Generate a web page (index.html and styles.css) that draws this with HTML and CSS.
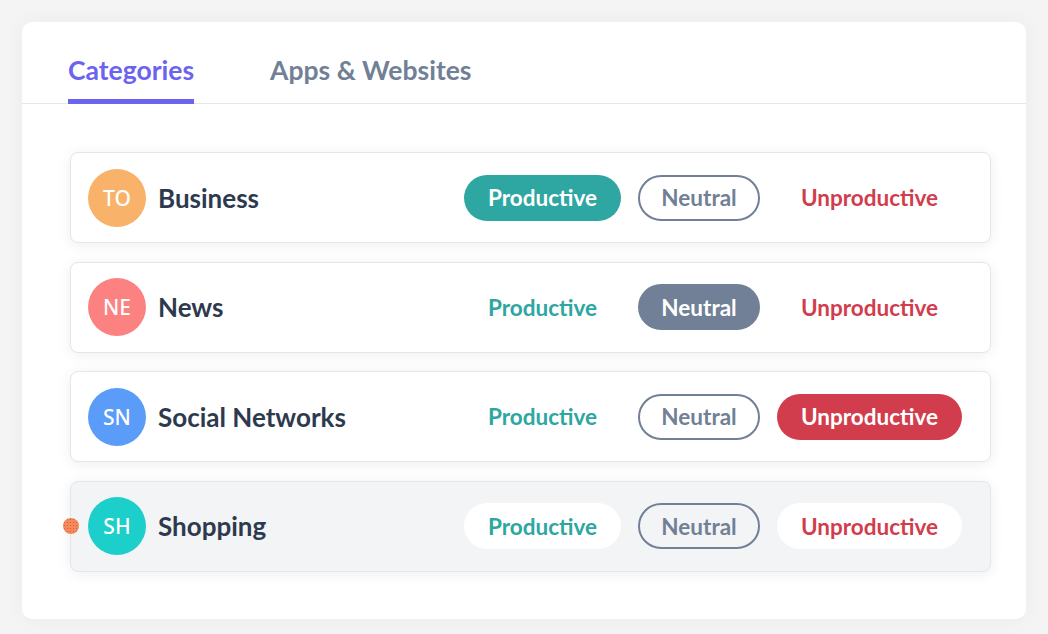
FILE: index.html
```html
<!DOCTYPE html>
<html>
<head>
<meta charset="utf-8">
<link rel="stylesheet" href="styles.css">
</head>
<body>
<div class="card">
  <div class="tabs">
    <div class="tab active">Categories</div>
    <div class="tab">Apps &amp; Websites</div>
  </div>
  <div class="list">
    <div class="row">
      <div class="who"><span class="avatar orange">TO</span><span class="name">Business</span></div>
      <div class="pills">
        <span class="pill prod filled">Productive</span>
        <span class="pill neu">Neutral</span>
        <span class="pill unp">Unproductive</span>
      </div>
    </div>
    <div class="row">
      <div class="who"><span class="avatar salmon">NE</span><span class="name">News</span></div>
      <div class="pills">
        <span class="pill prod">Productive</span>
        <span class="pill neu filled">Neutral</span>
        <span class="pill unp">Unproductive</span>
      </div>
    </div>
    <div class="row">
      <div class="who"><span class="avatar blue">SN</span><span class="name">Social Networks</span></div>
      <div class="pills">
        <span class="pill prod">Productive</span>
        <span class="pill neu">Neutral</span>
        <span class="pill unp filled">Unproductive</span>
      </div>
    </div>
    <div class="row hover">
      <span class="cursor"></span>
      <div class="who"><span class="avatar teal">SH</span><span class="name">Shopping</span></div>
      <div class="pills">
        <span class="pill prod">Productive</span>
        <span class="pill neu">Neutral</span>
        <span class="pill unp">Unproductive</span>
      </div>
    </div>
  </div>
</div>
</body>
</html>
```
FILE: styles.css
```css
* { box-sizing: border-box; }
html, body { margin: 0; padding: 0; }
body {
  background: #f4f4f5;
  font-family: Lato, "Open Sans", sans-serif;
  width: 1048px;
  height: 634px;
  padding: 22px 22px 0 22px;
}
.card {
  width: 1004px;
  height: 597px;
  background: #fff;
  border-radius: 10px;
  box-shadow: 0 0 24px rgba(0,0,0,0.04);
}
.tabs {
  display: flex;
  gap: 76px;
  padding: 0 46px;
  height: 82px;
  border-bottom: 1px solid #e2e8f0;
  align-items: flex-end;
}
.tab {
  font-size: 26.5px;
  font-weight: 700;
  color: #718096;
  padding-bottom: 14px;
  line-height: 30px;
  border-bottom: 5px solid transparent;
  margin-bottom: -1px;
}
.tab.active {
  color: #6c63ee;
  border-bottom-color: #6c63ee;
}
.list {
  padding: 48px 35px 0 48px;
  display: flex;
  flex-direction: column;
  gap: 18.67px;
}
.row {
  position: relative;
  height: 91px;
  border: 1px solid #e3e6ea;
  border-radius: 8px;
  background: #fff;
  box-shadow: 0 2px 14px rgba(0,0,0,0.07);
  display: flex;
  align-items: center;
  justify-content: space-between;
  padding: 0 28px 0 17px;
}
.row.hover { background: #f3f4f6; }
.who { display: flex; align-items: center; gap: 12px; }
.avatar {
  width: 58px; height: 58px; border-radius: 50%;
  display: flex; align-items: center; justify-content: center;
  color: #fff; font-size: 21px; font-weight: 500;
  font-family: "Noto Sans", Lato, sans-serif;
}
.orange { background: #f8b26a; }
.salmon { background: #fc8181; }
.blue { background: #5a9cf8; }
.teal { background: #1ccfcb; }
.name { font-size: 26px; font-weight: 700; color: #2d3a4e; }
.pills { display: flex; gap: 17px; }
.pill {
  height: 46px;
  border-radius: 23px;
  display: flex; align-items: center; justify-content: center;
  font-size: 22.5px; font-weight: 700;
  border: 2px solid transparent;
}
.pill.prod { width: 157px; color: #2ea6a1; }
.pill.neu { width: 122px; color: #718096; border-color: #718096; }
.pill.unp { width: 185px; color: #d13d4c; }
.pill.prod.filled { background: #2ea6a1; color: #fff; }
.pill.neu.filled { background: #718096; color: #fff; }
.pill.unp.filled { background: #d13d4c; color: #fff; }
.row.hover .pill.prod, .row.hover .pill.unp { background: #fff; }
.row.hover .pill.neu { background: transparent; }
.cursor {
  position: absolute;
  left: -8px; top: 36px;
  width: 16px; height: 16px; border-radius: 50%;
  background: radial-gradient(circle, #e8506a 30%, rgba(232,80,106,0) 31%) 0 0 / 3px 3px, #f28b55;
}
```
